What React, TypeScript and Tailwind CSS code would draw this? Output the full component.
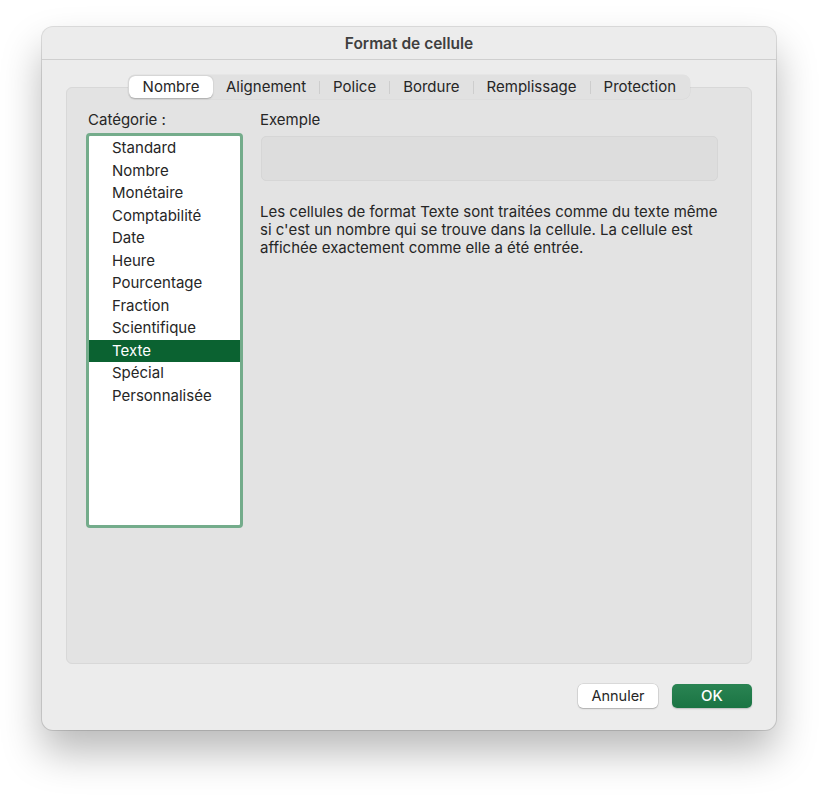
import React from "react";

const items = [
  "Standard",
  "Nombre",
  "Monétaire",
  "Comptabilité",
  "Date",
  "Heure",
  "Pourcentage",
  "Fraction",
  "Scientifique",
  "Texte",
  "Spécial",
  "Personnalisée",
];

const tabs = ["Nombre", "Alignement", "Police", "Bordure", "Remplissage", "Protection"];

export default function App() {
  return (
    <div
      className="w-[822px] h-[798px] bg-white pt-[27px] pl-[42px]"
      style={{ fontFamily: "Inter, 'Noto Sans', sans-serif" }}
    >
      <div className="w-[734px] h-[703px] bg-[#ececec] rounded-[11px] shadow-[0_0_0_1px_rgba(0,0,0,0.12),0_22px_40px_rgba(0,0,0,0.28)] flex flex-col">
        {/* Title bar */}
        <div className="h-[33px] border-b border-[#cfcfcf] flex items-center justify-center">
          <span className="text-[15.5px] font-semibold text-[#3f3f3f] pt-[1px]">Format de cellule</span>
        </div>

        {/* Tabs */}
        <div className="flex justify-center mt-[15px] relative z-10">
          <div className="flex items-center h-[24px] bg-[#e1e1e1] rounded-[7px] p-[1px] shadow-[0_0_0_0.5px_rgba(0,0,0,0.05)]">
            {tabs.map((t, i) => (
              <React.Fragment key={t}>
                {i > 1 && <div className="w-px h-[13px] bg-[#cdcdcd]" />}
                <div
                  className={
                    i === 0
                      ? "h-[22px] w-[84px] flex items-center justify-center bg-white rounded-[6px] shadow-[0_0.5px_1.5px_rgba(0,0,0,0.25)] text-[15px] text-[#262626]"
                      : "h-[22px] px-[13px] flex items-center justify-center text-[15px] text-[#262626]"
                  }
                >
                  {t}
                </div>
              </React.Fragment>
            ))}
          </div>
        </div>

        {/* Panel */}
        <div className="mx-[24px] mt-[-12px] h-[577px] bg-[#e3e3e3] rounded-[6px] border border-[#d8d8d8] flex pt-[23px] pl-[19px] pr-[33px]">
          {/* Left: category */}
          <div className="flex flex-col w-[157px] shrink-0">
            <div className="h-[18px] flex items-center pl-[2px] text-[15px] text-[#262626]">Catégorie :</div>
            <div className="mt-[4px] h-[395px] border-[3px] border-[#74ac8b] rounded-[4px] bg-white pt-[1px]">
              {items.map((it) => (
                <div
                  key={it}
                  className={
                    it === "Texte"
                      ? "h-[22.5px] flex items-center pl-[23px] bg-[#0b6231] text-white text-[15px]"
                      : "h-[22.5px] flex items-center pl-[23px] text-[#262626] text-[15px]"
                  }
                >
                  {it}
                </div>
              ))}
            </div>
          </div>

          {/* Right */}
          <div className="flex-1 min-w-0 flex flex-col ml-[17px]">
            <div className="h-[18px] flex items-center text-[15px] text-[#262626]">Exemple</div>
            <div className="mt-[7px] ml-[1px] h-[45px] bg-[#dddddd] border border-[#d6d6d6] rounded-[5px]" />
            <p className="mt-[22px] w-[466px] text-[15px] leading-[18px] text-[#262626]">
              Les cellules de format Texte sont traitées comme du texte même si c'est un nombre qui se trouve dans la cellule. La cellule est affichée exactement comme elle a été entrée.
            </p>
          </div>
        </div>

        {/* Buttons */}
        <div className="flex justify-end gap-[14px] mt-[20px] mr-[24px]">
          <button className="w-[80px] h-[24px] bg-white rounded-[5px] shadow-[0_0_0_0.5px_rgba(0,0,0,0.15),0_1px_1.5px_rgba(0,0,0,0.2)] text-[14.5px] text-[#262626] flex items-center justify-center">
            Annuler
          </button>
          <button className="w-[80px] h-[24px] bg-gradient-to-b from-[#2a8453] to-[#1a7443] rounded-[5px] shadow-[0_1px_1.5px_rgba(0,0,0,0.2)] text-[15px] font-medium text-white flex items-center justify-center">
            OK
          </button>
        </div>
      </div>
    </div>
  );
}
